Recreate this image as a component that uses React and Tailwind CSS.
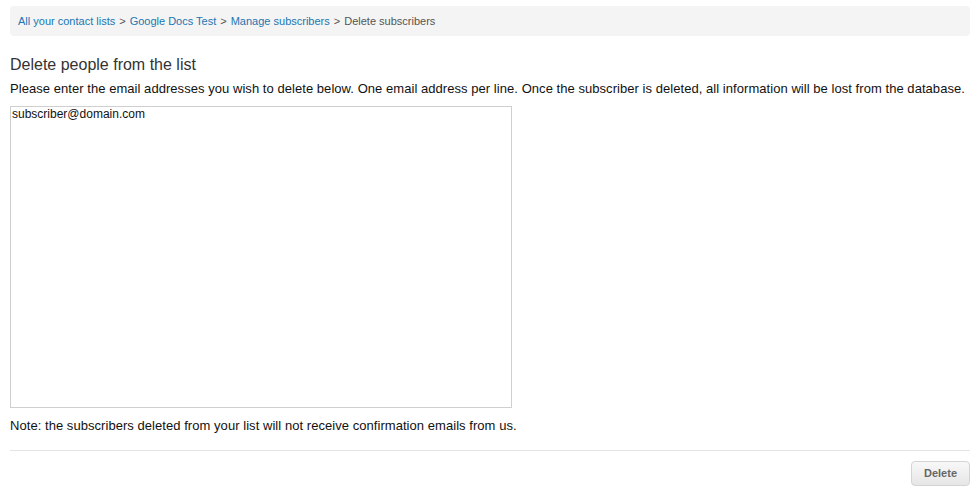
import React from 'react';

const crumbs = ['All your contact lists', 'Google Docs Test', 'Manage subscribers'];

const App = () => {
  return (
    <div className="w-[977px] h-[494px] bg-white px-[10px] pt-[6px] text-[#222]" style={{ fontFamily: '"Liberation Sans", Arial, sans-serif' }}>
      {/* Breadcrumb */}
      <div className="h-[30px] flex items-center pt-[1px] px-[8px] bg-[#f4f4f4] rounded-[4px] text-[11px] w-[960px]">
        {crumbs.map(c => (
          <React.Fragment key={c}>
            <a href="#" className="text-[#2176b3]">{c}</a>
            <span className="text-[#555] mx-[4px]">&gt;</span>
          </React.Fragment>
        ))}
        <span className="text-[#555]">Delete subscribers</span>
      </div>

      <h2 className="mt-[19px] text-[16px] leading-[20px] text-[#333]">Delete people from the list</h2>
      <p className="mt-[5px] text-[13px] tracking-[0.05px] leading-[18px] text-[#111]">
        Please enter the email addresses you wish to delete below. One email address per line. Once the subscriber is deleted, all information will be lost from the database.
      </p>

      <textarea
        className="mt-[8px] block w-[502px] h-[302px] border border-[#cfcfcf] px-[1px] pt-0 text-[12px] leading-[15px] text-[#111] resize-none outline-none"
        defaultValue="subscriber@domain.com"
      />

      <p className="mt-[9px] text-[13px] tracking-[0.05px] leading-[18px] text-[#111]">
        Note: the subscribers deleted from your list will not receive confirmation emails from us.
      </p>

      <div className="mt-[15px] w-[960px] border-t border-[#e5e5e5]" />

      <div className="w-[960px] flex justify-end mt-[10px]">
        <button className="w-[59px] h-[25px] rounded-[4px] border border-[#d4d4d4] bg-gradient-to-b from-[#f8f8f8] to-[#e6e6e6] text-[11px] font-bold text-[#666]">
          Delete
        </button>
      </div>
    </div>
  );
};

export default App;
